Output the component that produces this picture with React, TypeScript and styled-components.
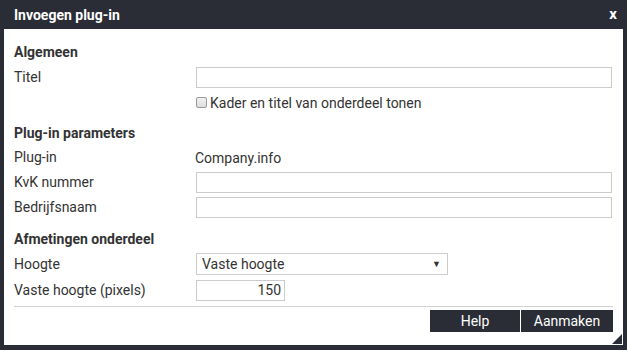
import React from "react";
import styled, { createGlobalStyle } from "styled-components";

const Global = createGlobalStyle`
  html, body { margin: 0; padding: 0; }
  body {
    width: 627px;
    height: 350px;
    overflow: hidden;
    font-family: Roboto, "Liberation Sans", Arial, sans-serif;
    background: #ffffff;
  }
`;

const Frame = styled.div`
  position: relative;
  box-sizing: border-box;
  width: 627px;
  height: 350px;
  background: #2a2d36;
  padding: 0 4px 5px 4px;
  display: flex;
  flex-direction: column;
`;

const TitleBar = styled.div`
  height: 29px;
  display: flex;
  align-items: center;
  justify-content: space-between;
  padding: 0 6px 0 10px;
  color: #ffffff;
  font-size: 14px;
  font-weight: 700;
`;

const Close = styled.span`
  font-size: 15px;
  font-weight: 700;
  line-height: 1;
  margin-top: -1px;
`;

const Body = styled.div`
  flex: 1;
  background: #ffffff;
  padding: 13px 10px 0 10px;
  color: #333333;
  font-size: 14px;
  display: flex;
  flex-direction: column;
`;

const Section = styled.div<{ $gapTop?: number }>`
  display: flex;
  flex-direction: column;
  gap: 4px;
  margin-top: ${(p) => p.$gapTop ?? 0}px;
`;

const Heading = styled.div`
  height: 20px;
  line-height: 20px;
  font-weight: 700;
`;

const Row = styled.div<{ $h?: number }>`
  display: grid;
  grid-template-columns: 182px 1fr;
  align-items: center;
  height: ${(p) => p.$h ?? 21}px;
`;

const Label = styled.span`
  line-height: 21px;
`;

const Value = styled.span`
  margin-left: -1px;
`;

const TextInput = styled.div<{ $w?: number; $right?: boolean }>`
  box-sizing: border-box;
  height: 21px;
  width: ${(p) => (p.$w ? `${p.$w}px` : "416px")};
  border: 1px solid #cccccc;
  background: #ffffff;
  padding: 0 3px;
  text-align: ${(p) => (p.$right ? "right" : "left")};
  line-height: 19px;
`;

const Select = styled.div`
  box-sizing: border-box;
  height: 22px;
  width: 252px;
  border: 1px solid #cccccc;
  display: flex;
  align-items: center;
  justify-content: space-between;
  padding: 0 6px 0 5px;
`;

const Arrow = styled.span`
  font-size: 9px;
  color: #333;
`;

const CheckLine = styled.div`
  display: flex;
  align-items: center;
  gap: 3px;
`;

const Box = styled.span`
  box-sizing: border-box;
  width: 11px;
  height: 11px;
  border: 1px solid #9a9a9a;
  border-radius: 2px;
  background: linear-gradient(#f2f2f2, #dcdcdc);
`;

const Rule = styled.div`
  height: 1px;
  background: #d2d2d2;
  margin-top: 5px;
`;

const Footer = styled.div`
  display: flex;
  justify-content: flex-end;
  gap: 1px;
  margin-top: 3px;
`;

const Button = styled.button<{ $w: number }>`
  width: ${(p) => p.$w}px;
  height: 22px;
  border: none;
  background: #2a2d36;
  color: #ffffff;
  font-family: Roboto, "Liberation Sans", Arial, sans-serif;
  font-size: 14px;
  padding: 0;
  cursor: pointer;
`;

const Grip = styled.div`
  position: absolute;
  right: 5px;
  bottom: 6px;
  width: 0;
  height: 0;
  border-style: solid;
  border-width: 0 0 10px 10px;
  border-color: transparent transparent #2a2d36 transparent;
`;

export default function App() {
  return (
    <>
      <Global />
      <Frame>
        <TitleBar>
          <span>Invoegen plug-in</span>
          <Close>x</Close>
        </TitleBar>
        <Body>
          <Section>
            <Heading>Algemeen</Heading>
            <Row style={{ marginTop: 1 }}>
              <Label>Titel</Label>
              <TextInput />
            </Row>
            <Row>
              <span />
              <CheckLine>
                <Box />
                <span>Kader en titel van onderdeel tonen</span>
              </CheckLine>
            </Row>
          </Section>
          <Section $gapTop={10}>
            <Heading>Plug-in parameters</Heading>
            <Row>
              <Label>Plug-in</Label>
              <Value>Company.info</Value>
            </Row>
            <Row>
              <Label>KvK nummer</Label>
              <TextInput />
            </Row>
            <Row>
              <Label>Bedrijfsnaam</Label>
              <TextInput />
            </Row>
          </Section>
          <Section $gapTop={11}>
            <Heading>Afmetingen onderdeel</Heading>
            <Row $h={22}>
              <Label>Hoogte</Label>
              <Select>
                <span>Vaste hoogte</span>
                <Arrow>▼</Arrow>
              </Select>
            </Row>
            <Row style={{ marginTop: 1 }}>
              <Label>Vaste hoogte (pixels)</Label>
              <TextInput $w={89} $right>
                150
              </TextInput>
            </Row>
          </Section>
          <Rule />
          <Footer>
            <Button $w={90}>Help</Button>
            <Button $w={92}>Aanmaken</Button>
          </Footer>
        </Body>
        <Grip />
      </Frame>
    </>
  );
}
